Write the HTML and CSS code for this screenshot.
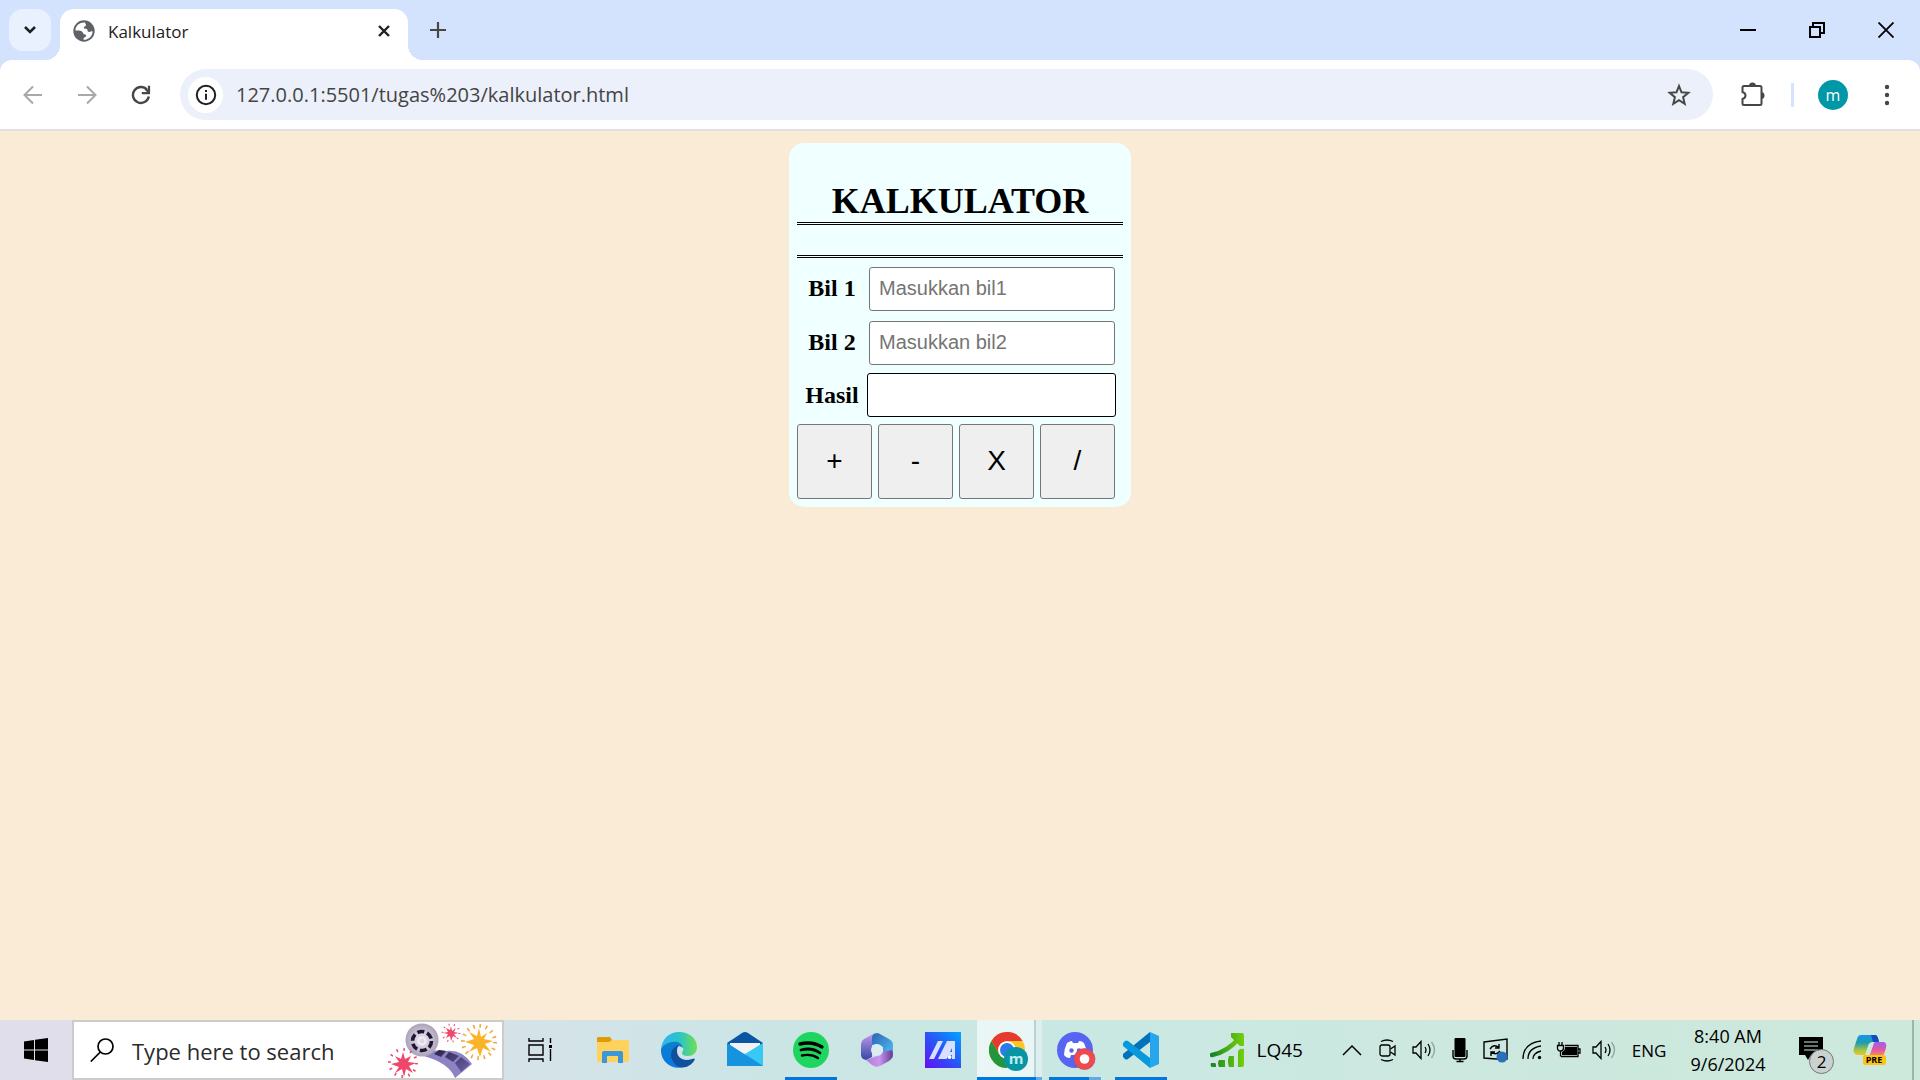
FILE: index.html
```
<!DOCTYPE html>
<html lang="id">
<head>
<meta charset="utf-8">
<title>Kalkulator</title>
<link rel="stylesheet" href="styles.css">
</head>
<body>
<div class="screen">
  <header class="tabstrip">
    <button class="tab-search" aria-label="Search tabs"><svg width="14" height="10" viewBox="0 0 14 10"><path d="M2 2l5 5 5-5" fill="none" stroke="#1f2023" stroke-width="2.6"/></svg></button>
    <div class="tab">
      <svg class="favicon" width="22" height="22" viewBox="0 0 22 22"><circle cx="11" cy="11" r="10.7" fill="#5f6368"/><path d="M12 2.500C6 2 2.500 6 2.400 10.500c2.500-.3 6.100 0 7.100 1.500.8 1.200 1 2.500 2.500 2.500 1.300 0 1.500 1 .8 2-.7.900-2.300.8-2.300 2.300v1c5 .3 9-3.800 9.100-8.300-.8-.6-1.600-.3-2.600.2-1.500.8-2.500-.2-2.600-1.700-.1-1.200-1-1.200-2.200-1.300-1.600-.1-1.800-1.800-.5-2.300 1.500-.5 1.700-1.800.8-2.400z" fill="#fff"/><path d="M8 3.500c-2.500 1.200-4.700 3.500-5 6l6-.3c0-1.500 1.800-1.500 2-3 .1-1.500-1-2.700-3-2.700z" fill="#fff"/></svg>
      <span class="tab-title">Kalkulator</span>
      <button class="icon-button" aria-label="Close tab"><svg width="14" height="14" viewBox="0 0 14 14"><path d="M2 2l10 10M12 2L2 12" stroke="#1f2023" stroke-width="2.400"/></svg></button>
    </div>
    <button class="icon-button new-tab" aria-label="New tab"><svg width="16" height="16" viewBox="0 0 16 16"><path d="M8 0v16M0 8h16" stroke="#474747" stroke-width="2.200"/></svg></button>
    <div class="window-controls">
      <button aria-label="Minimize"><svg width="16" height="16" viewBox="0 0 16 16"><path d="M0 8h16" stroke="#000" stroke-width="2"/></svg></button>
      <button aria-label="Restore"><svg width="16" height="16" viewBox="0 0 16 16"><path d="M1 5h10v10H1zM4 5V1h11v10h-4" fill="none" stroke="#000" stroke-width="2"/></svg></button>
      <button aria-label="Close"><svg width="16" height="16" viewBox="0 0 16 16"><path d="M.5.5l15 15M15.500.5l-15 15" stroke="#000" stroke-width="1.800"/></svg></button>
    </div>
  </header>

  <nav class="toolbar">
    <button class="tool" aria-label="Back"><svg width="20" height="20" viewBox="0 0 20 20"><path d="M19 10H2M10 1.500L1.500 10l8.500 8.500" fill="none" stroke="#a8a8a8" stroke-width="2"/></svg></button>
    <button class="tool" aria-label="Forward"><svg width="20" height="20" viewBox="0 0 20 20"><path d="M1 10h17M10 1.500l8.500 8.500-8.500 8.500" fill="none" stroke="#a8a8a8" stroke-width="2"/></svg></button>
    <button class="tool" aria-label="Reload"><svg width="20" height="20" viewBox="0 0 20 20"><path d="M17.800 11.500A8 8 0 1 1 16 4.700" fill="none" stroke="#474747" stroke-width="2.400"/><path d="M18 .8v7.400h-7.200M17.500 7l-3-3" fill="none" stroke="#474747" stroke-width="2.200"/></svg></button>
    <div class="omnibox">
      <button class="site-info" aria-label="Site information"><svg width="22" height="22" viewBox="0 0 22 22"><circle cx="11" cy="11" r="9.200" fill="none" stroke="#1f2023" stroke-width="2"/><path d="M11 9.800v6M11 6v2" stroke="#1f2023" stroke-width="2"/></svg></button>
      <input class="url" aria-label="Address" value="127.0.0.1:5501/tugas%203/kalkulator.html">
      <button class="icon-button" aria-label="Bookmark"><svg width="24" height="24" viewBox="0 0 24 24"><path d="M12 3l2.500 6.300 6.800.5-5.200 4.400 1.600 6.600L12 17.200l-5.700 3.600 1.600-6.600-5.200-4.400 6.800-.5z" fill="none" stroke="#474747" stroke-width="2"/></svg></button>
    </div>
    <button class="tool extensions" aria-label="Extensions"><svg width="26" height="26" viewBox="0 0 26 26"><path d="M4 4h16q1.500 0 1.500 1.500v16q0 1.500-1.500 1.500H4q-1.500 0-1.500-1.500V17q3-1 3-3.500t-3-3.500V5.500Q2.500 4 4 4z" fill="none" stroke="#474747" stroke-width="2"/><path d="M9 4a3.500 3.500 0 0 1 7 0zM21 10a3.200 3.200 0 0 1 0 7z" fill="#474747"/></svg></button>
    <span class="divider"></span>
    <button class="avatar" aria-label="Profile">m</button>
    <button class="tool menu" aria-label="Menu"><svg width="6" height="22" viewBox="0 0 6 22"><g fill="#474747"><circle cx="3" cy="3" r="2.200"/><circle cx="3" cy="11" r="2.200"/><circle cx="3" cy="19" r="2.200"/></g></svg></button>
  </nav>

  <main class="page">
    <form class="calculator">
      <h1>KALKULATOR</h1>
      <hr>
      <div class="field"><label for="bil1">Bil 1</label><input id="bil1" placeholder="Masukkan bil1"></div>
      <div class="field"><label for="bil2">Bil 2</label><input id="bil2" placeholder="Masukkan bil2"></div>
      <div class="field result"><label for="hasil">Hasil</label><input id="hasil" readonly></div>
      <div class="keys">
        <button type="button">+</button><button type="button">-</button><button type="button">X</button><button type="button">/</button>
      </div>
    </form>
  </main>

  <footer class="taskbar">
    <button class="start" aria-label="Start"><svg width="24" height="24" viewBox="0 0 24 24"><path d="M0 3.500L10 2v9.500H0zM11 1.800L24 0v11.500H11zM0 12.500h10V22L0 20.500zM11 12.500h13V24l-13-1.800z"/></svg></button>
    <label class="search">
      <svg width="24" height="24" viewBox="0 0 24 24"><circle cx="15.500" cy="8.500" r="7.500" fill="none" stroke="#000" stroke-width="1.700"/><path d="M10.300 14L.8 23.500" stroke="#000" stroke-width="1.700"/></svg>
      <input placeholder="Type here to search" aria-label="Type here to search">
      <svg width="112" height="56" viewBox="386 1022 112 56">
        <defs><linearGradient id="film" x2="1" y2="1"><stop stop-color="#2b2045"/><stop offset="1" stop-color="#6c64ac"/></linearGradient><radialGradient id="reel"><stop offset=".3" stop-color="#ddd6e4"/><stop offset="1" stop-color="#aaa3b8"/></radialGradient></defs>
        <path d="M424 1056q10-8 22-5 16-2 26 13l-17 14q-6-15-31-22z" fill="#8c83c4"/>
        <path d="M434 1054l5-4 7 1-5 6zM445 1057l4-5 10 4-6 6zM455 1063l6-6 9 7-9 8z" fill="url(#film)"/>
        <circle cx="422" cy="1040" r="16.500" fill="url(#reel)"/><circle cx="422" cy="1041" r="9.500" fill="none" stroke="#211735" stroke-width="3.600" stroke-dasharray="7 2.950"/><circle cx="422" cy="1041" r="3.500" fill="none" stroke="#f1edf4" stroke-width="2"/>
        <path d="M403 1052l2 7 6-3-3 6 8 1-7 3 4 7-7-4-2 8-2-8-7 4 4-6-8-3 8-2-4-6 6 3z" fill="#ee476a"/><circle cx="403" cy="1063" r="13.500" fill="none" stroke="#ee476a" stroke-width="3" stroke-dasharray="1.500 5.570"/>
        <path d="M451 1026l1 5 4-3-2 4 5 1-5 1 3 4-4-2-2 5-1-5-4 2 2-4-5-1 5-1-2-4 4 2z" fill="#ee476a"/><circle cx="451" cy="1033" r="8.500" fill="none" stroke="#ee476a" stroke-width="2" stroke-dasharray="1 4.340"/>
        <path d="M479 1028l2 9 6-4-3 6 9 2-8 3 6 8-8-4-3 9-3-9-8 4 5-7-9-3 9-3-5-7 8 4z" fill="#fbb32c"/><circle cx="479" cy="1042" r="16" fill="none" stroke="#f5a33b" stroke-width="4" stroke-dasharray="1.500 4.783"/>
      </svg>
    </label>
    <div class="apps">
      <button class="taskview" aria-label="Task view"><svg width="26" height="26" viewBox="0 0 26 26"><path d="M2 1v3h14V1M2 8h14v10H2zM2 25v-3h14v3M23.500 1v5M23.500 12v12" fill="none" stroke="#000" stroke-width="1.400"/><path d="M22 8h3v3h-3z"/></svg></button>
      <button class="app" aria-label="File Explorer"><svg width="36" height="36" viewBox="0 0 36 36"><path d="M2 6q0-1 1-1h12l2 3v4H2z" fill="#e09b05"/><path d="M2 10h12l3-2h15q2 0 2 2v18q0 2-2 2H4q-2 0-2-2z" fill="#ffd25c"/><path d="M7 31V21q0-2 2-2h17q2 0 2 2v10h-5v-7H12v7z" fill="#3a96dd"/></svg></button>
      <button class="app" aria-label="Edge"><svg width="36" height="36" viewBox="0 0 36 36"><defs><linearGradient id="eg"><stop stop-color="#2fb5ef"/><stop offset=".5" stop-color="#2ac3cc"/><stop offset="1" stop-color="#6fe04f"/></linearGradient><linearGradient id="eb" x2="0" y2="1"><stop stop-color="#0d7fcb"/><stop offset="1" stop-color="#0878e0"/></linearGradient></defs><path d="M0 17C1 7 8 0 18 0c11 0 18 7 18 15 0 6-4 9-9 9-4 0-6-1-6-3 0-1 2-2 1-5C20 10 7 9 0 17z" fill="url(#eg)"/><path d="M0 17c4-8 20-11 22-1-5-4-9 0-9 5 0 7 6 12 14 12-14 8-28-3-27-16z" fill="url(#eb)"/><path d="M18 13c-7 2-11 10-5 18 6 8 16 4 20-2 2-3 0-3-2-2-8 3-15-1-15-8 0-3 1-5 2-6z" fill="#10509f"/></svg></button>
      <button class="app" aria-label="Mail"><svg width="36" height="36" viewBox="0 0 36 36"><path d="M0 11L15 1q3-2 6 0l15 10v8H0z" fill="#0b55a5"/><path d="M3 11h30v10H3z" fill="#f3f3f6"/><path d="M0 11l18 12 18-12v23H0z" fill="#2cb5ef"/><path d="M36 11L18 22l18 12z" fill="#37c8f3"/><path d="M0 11l36 23H0z" fill="#1693df"/></svg></button>
      <button class="app open" aria-label="Spotify"><svg width="36" height="36" viewBox="0 0 36 36"><circle cx="18" cy="18" r="18" fill="#1ed65f"/><g fill="none" stroke="#000" stroke-linecap="round"><path d="M7 12q12-3 22 3" stroke-width="3.400"/><path d="M8 18q11-3 19 3" stroke-width="2.800"/><path d="M9 23.500q9-2 16 2.500" stroke-width="2.400"/></g></svg></button>
      <button class="app" aria-label="Microsoft 365"><svg width="36" height="36" viewBox="0 0 36 36"><defs><linearGradient id="m1" x2="0" y2="1"><stop stop-color="#c39cf3"/><stop offset="1" stop-color="#3447a3"/></linearGradient><linearGradient id="m2" x2="1" y2="1"><stop stop-color="#2b62b4"/><stop offset="1" stop-color="#53c6f6"/></linearGradient><linearGradient id="m3"><stop stop-color="#b777d9"/><stop offset=".5" stop-color="#c895ee"/><stop offset="1" stop-color="#653a8f"/></linearGradient></defs><path d="M16 1L5 7q-3 2-3 5v11q0 4 5 5l6-3V13q0-5 3-12z" fill="url(#m1)"/><path d="M13 13V5q1-4 6-4l11 6q4 2 4 6v13l-10-3v-8l-6-3z" fill="url(#m2)"/><path d="M7 28l11-4 6-4 9-2q3 7-3 11l-9 5q-4 2-8-1z" fill="url(#m3)"/><circle cx="18" cy="18" r="6" fill="#d9edf2"/></svg></button>
      <button class="app" aria-label="MyASUS"><svg width="36" height="36" viewBox="0 0 36 36"><defs><linearGradient id="ma" x1="1" x2="0" y2="1"><stop stop-color="#00a5ff"/><stop offset=".5" stop-color="#2856f8"/><stop offset="1" stop-color="#650df3"/></linearGradient></defs><path d="M0 0h36v36H0z" fill="url(#ma)"/><path d="M13 9h5L9 27H4zM22 9h5l-9 18h-5zM27 9h3v18h-3V16l-5.500 11H18zM22 20h5v3h-7z" fill="#d7e1ff"/><circle cx="24.500" cy="25" r="2" fill="#fff"/></svg></button>
      <button class="app open active" aria-label="Chrome"><svg width="40" height="40" viewBox="0 0 40 40"><circle cx="18" cy="18" r="18" fill="#fcc629"/><path d="M2.400 9A18 18 0 0 1 33.600 9H18a9 9 0 0 0-8 13z" fill="#e53a2f"/><path d="M2.400 9A18 18 0 0 0 18 36l7-13q-9 6-15-1z" fill="#23963d"/><circle cx="18" cy="18" r="8.800" fill="#fff"/><circle cx="18" cy="18" r="7" fill="#2d7bea"/><circle cx="27" cy="27" r="12" fill="#0795a5"/><text x="27" y="32" class="badge-letter">m</text></svg></button>
      <button class="app open grouped" aria-label="Discord"><svg width="40" height="40" viewBox="0 0 40 40"><circle cx="18" cy="18" r="18" fill="#5865f2"/><path d="M10 11q3-2 5-2l1 2h5l1-2q3 0 5 2 3 6 3 12-3 3-6 3l-1-3h-9l-1 3q-4 0-6-3 0-6 3-12z" fill="#fff"/><circle cx="14.500" cy="18.500" r="2.200" fill="#5865f2"/><circle cx="22" cy="18.500" r="2.200" fill="#5865f2"/><circle cx="27.500" cy="27" r="10.500" fill="#ee4b51" stroke="#c04b55" stroke-width=".7"/><circle cx="27.500" cy="27" r="4.800" fill="#fff"/></svg></button>
      <button class="app open" aria-label="Visual Studio Code"><svg width="36" height="36" viewBox="0 0 36 36"><path d="M27 0v10L5 27q-2 1-3 0l-2-2q-1-2 0-3z" fill="#0072bb"/><path d="M27 36V26L5 9Q3 8 2 9l-2 2q-1 2 0 3z" fill="#0799dc"/><path d="M27 0l9 4v28l-9 4z" fill="#27a6ee"/></svg></button>
    </div>
    <a class="news" href="#">
      <svg width="34" height="34" viewBox="0 0 34 34"><defs><linearGradient id="gr" x1="0" x2="1"><stop stop-color="#198327"/><stop offset="1" stop-color="#73cf0a"/></linearGradient></defs><path d="M2 22Q18 19 30 4" fill="none" stroke="url(#gr)" stroke-width="4.500" stroke-linecap="round"/><path d="M21 0h11q2 0 2 2v11h-4L21 4zM1 30h4q1 0 1 2v2H2q-2-1-1-4zM9 27h6v7H9q-2-4 0-7zM19 23h5v11h-5q-2-6 0-11zM28 18q2-3 6-2v16q0 2-2 2h-4z" fill="url(#gr)"/></svg>
      <span>LQ45</span>
    </a>
    <div class="tray">
      <button aria-label="Show hidden icons"><svg width="20" height="12" viewBox="0 0 20 12"><path d="M1 11l9-9 9 9" fill="none" stroke="#000" stroke-width="1.500"/></svg></button>
      <button aria-label="Meet now"><svg width="20" height="24" viewBox="0 0 20 24"><rect x="2" y="7" width="10" height="11" rx="2" fill="none" stroke="#000" stroke-width="1.300"/><path d="M12.500 11L17 8v9l-4.500-3M3 3.500q6-3 12 0M3 21.500q6 3 12 0" fill="none" stroke="#000" stroke-width="1.300"/></svg></button>
      <button aria-label="Volume"><svg width="24" height="20" viewBox="0 0 24 20"><path d="M1 7h3l5-5.500v17L4 13H1zM13 7q2 3 0 6M16 4q4 6 0 12" fill="none" stroke="#000" stroke-width="1.300"/><path d="M19.500 2q6 8 0 16" fill="none" stroke="#8fa59c" stroke-width="1.300"/></svg></button>
      <button aria-label="Microphone"><svg width="16" height="26" viewBox="0 0 16 26"><rect x="2.500" y="1" width="11" height="19" rx="1"/><path d="M1 13v6q0 3 3 3h8q3 0 3-3v-6M8 22v3M4.500 24.500h7" fill="none" stroke="#000" stroke-width="1.400"/></svg></button>
      <button aria-label="Updates"><svg width="26" height="26" viewBox="0 0 26 26"><path d="M1 5l23-3v20H13L1 21z" fill="none" stroke="#000" stroke-width="1.400"/><path d="M7 12q4-6 9-1M16 7v4h-4M17 14q-4 5-9 1M8 19v-4h4" fill="none" stroke="#000" stroke-width="1.400"/><circle cx="19" cy="20" r="5.500" fill="#2870b9"/></svg></button>
      <button aria-label="Network"><svg width="20" height="20" viewBox="0 0 20 20"><path d="M1 19Q1 3 19 1M6 19Q6 8 19 6M11 19q0-6 8-8" fill="none" stroke="#000" stroke-width="1.300"/><circle cx="17.500" cy="17.500" r="1.700"/></svg></button>
      <button aria-label="Battery"><svg width="25" height="18" viewBox="0 0 25 18"><path d="M5 15.500h17v-11H9M22 8h2v4h-2M3 1v3M6 1v3M1.500 4.500h6V7q0 3-3 3t-3-3zM4.500 10v5.500" fill="none" stroke="#000" stroke-width="1.300"/><path d="M9 6h12v8H6v-3q3-1 3-5z"/></svg></button>
      <button aria-label="Sound"><svg width="24" height="20" viewBox="0 0 24 20"><path d="M1 7h3l5-5.500v17L4 13H1zM13 7q2 3 0 6M16 4q4 6 0 12" fill="none" stroke="#000" stroke-width="1.300"/><path d="M19.500 2q6 8 0 16" fill="none" stroke="#8fa59c" stroke-width="1.300"/></svg></button>
      <button class="language">ENG</button>
      <button class="clock"><time>8:40 AM</time><time>9/6/2024</time></button>
      <button class="notifications" aria-label="2 notifications"><svg width="24" height="24" viewBox="0 0 24 24"><path d="M0 0h24v18H12l-3 5-3-5H0z"/><path d="M5 5h14M5 9h14M5 13h14" stroke="#cfe8dc" stroke-width="1.200"/></svg><span class="count">2</span></button>
      <button class="copilot" aria-label="Copilot"><svg width="34" height="32" viewBox="0 0 34 32"><defs><linearGradient id="c1" x2="0" y2="1"><stop stop-color="#1494ef"/><stop offset=".4" stop-color="#219dac"/><stop offset=".8" stop-color="#b4c938"/><stop offset="1" stop-color="#efc329"/></linearGradient><linearGradient id="c2" x2="0" y2="1"><stop stop-color="#a05fee"/><stop offset=".5" stop-color="#e255a8"/><stop offset="1" stop-color="#fb9b53"/></linearGradient></defs><path d="M8 1h14q3 1 4 7h-6q-4 0-5 4l-3 9H5q-6-1-4-7l3-9q1-4 4-4z" fill="url(#c1)"/><path d="M18 1h5q2 1 3 7h-6z" fill="#174bbd"/><path d="M22 8h9q3 1 2 6l-3 9H16l4-11q1-4 2-4z" fill="url(#c2)"/><rect x="10" y="21" width="23" height="10" rx="2" fill="#fdc413"/><text x="21" y="29" class="pre">PRE</text></svg></button>
      <button class="show-desktop" aria-label="Show desktop"></button>
    </div>
  </footer>
</div>
</body>
</html>
```
FILE: styles.css
```
* { box-sizing: border-box; }
body { margin: 0; font-family: "Open Sans", "Noto Sans", sans-serif; color: #000; }
button { padding: 0; border: 0; background: none; color: inherit; font: inherit; }
input { min-width: 0; padding: 0; font: inherit; }
svg { display: block; flex: none; }

.screen { display: flex; flex-direction: column; min-height: 100vh; background: #d3e3fd; }

/* Browser tabs */
.tabstrip { display: flex; align-items: flex-start; height: 60px; padding: 9px 0 0 9px; }
.tab-search { display: grid; place-items: center; width: 42px; height: 42px; margin-right: 9px; border-radius: 14px; background: #e9f1fe; }
.tab { position: relative; display: flex; align-items: center; width: 348px; height: 51px; padding: 0 14px 8px 13px; border-radius: 14px 14px 0 0; background: #fff; }
.tab::before, .tab::after { content: ""; position: absolute; bottom: 0; width: 15px; height: 15px; }
.tab::before { right: 100%; background: radial-gradient(circle at 0 0, transparent 15px, #fff 15px); }
.tab::after { left: 100%; background: radial-gradient(circle at 100% 0, transparent 15px, #fff 15px); }
.tab-title { flex: 1; margin-left: 13px; padding-top: 2px; font-size: 17px; line-height: 24px; color: #1f2023; }
.icon-button { display: grid; place-items: center; width: 20px; height: 42px; }
.new-tab { margin-left: 20px; }
.window-controls { display: flex; margin-left: auto; }
.window-controls button { display: grid; place-items: center; width: 69px; height: 42px; }

/* Address row */
.toolbar { display: flex; align-items: center; height: 71px; padding: 0 12px; border-bottom: 2px solid #dfe1e1; border-radius: 12px 12px 0 0; background: #fff; }
.tool { display: grid; place-items: center; width: 42px; height: 42px; margin-right: 12px; }
.omnibox { display: flex; flex: 1; align-items: center; height: 51px; margin-left: 6px; padding: 0 26px 0 8px; border-radius: 26px; background: #ecf0fa; }
.site-info { display: grid; place-items: center; width: 35px; height: 36px; border-radius: 50%; background: #fff; }
.url { flex: 1; margin-left: 13px; border: 0; background: none; font-size: 20px; color: #444; }
.extensions { margin: 0 17px 0 19px; }
.divider { width: 3px; height: 24px; border-radius: 1px; background: #d3e3fd; }
.avatar { width: 30px; height: 30px; margin-left: 24px; border-radius: 50%; background: #0097a7; font-size: 16px; line-height: 28px; color: #fff; }
.menu { margin: 0 0 0 18px; }

/* Calculator page */
.page { display: flex; flex: 1; justify-content: center; align-items: flex-start; padding: 12px 0; background: #faebd7; }
.calculator { width: 342px; padding: 8px; border-radius: 15px; background: #f0ffff; font-family: "Liberation Serif", serif; }
.calculator h1 { margin: 30px 0; border-bottom: 3px double #000; font-size: 36px; line-height: 41px; text-align: center; }
.calculator hr { height: 3px; margin: 0 0 9px; border: 0; border-top: 3px double #000; }
.field { display: flex; align-items: center; margin-bottom: 10px; padding-right: 8px; }
.field label { width: 72px; padding: 0 2px 2px 0; font-size: 24px; font-weight: bold; line-height: 28px; text-align: center; }
.field input { flex: 1; height: 44px; padding: 0 9px 2px; border: 1px solid #767676; border-radius: 3px; background: #fff; font-family: "Liberation Sans", sans-serif; font-size: 20px; }
.field input::placeholder { color: #757575; }
.result { margin: -2px 0 7px; padding-right: 7px; }
.result label { width: 70px; padding: 0; }
.result input { border-color: #000; }
.keys { display: flex; gap: 6px; }
.keys button { width: 75px; height: 75px; padding-bottom: 2px; border: 1px solid #767676; border-radius: 3px; background: #efefef; font-family: "Liberation Sans", sans-serif; font-size: 28px; }

/* Desktop taskbar */
.taskbar { display: flex; height: 60px; background: linear-gradient(90deg, #e1deeb 0, #dcdfeb 12%, #d5e3e9 27%, #cbe5e5 40%, #cae8e3 55%, #cce8df 75%, #cde9dc 100%); }
.taskbar button { display: grid; place-items: center; flex: none; }
.start { width: 72px; }
.search { display: flex; flex: none; align-items: center; width: 432px; padding: 0 4px 0 16px; border: 2px solid #ccc; background: #fff; }
.search input { flex: 1; margin-left: 18px; padding-top: 2px; border: 0; background: none; font-size: 22px; }
.search input::placeholder { color: #2b2b2b; }
.apps { display: flex; flex: none; }
.taskview { width: 72px; margin-right: 4px; }
.taskbar .app { width: 66px; }
.open { background: linear-gradient(#0078d7, #0078d7) center bottom / 52px 3px no-repeat; }
.taskbar .active { padding: 4px 0 0; background: linear-gradient(90deg, transparent 1px, #0078d7 1px 60px, #60aae6 60px) 0 100% / 100% 3px no-repeat, linear-gradient(90deg, transparent 1px, #eaf5f5 1px 58px, #b8d3d2 58px 60px, #dceeee 60px); }
.taskbar .grouped { padding: 4px 0 0 4px; background: linear-gradient(90deg, #0078d7 40px, #60aae6 40px) center bottom / 52px 3px no-repeat; }
.badge-letter { font: 700 15px "Open Sans", sans-serif; fill: #c0eef0; text-anchor: middle; }
.news { display: flex; align-items: center; gap: 13px; margin-left: auto; padding-right: 31px; font-size: 19px; color: #000; text-decoration: none; }
.tray { display: flex; flex: none; }
.tray button { width: 36px; }
.tray .language { width: 54px; font-size: 17px; }
.tray .clock { width: 104px; align-content: center; font-size: 18px; line-height: 28px; white-space: nowrap; }
.tray .notifications { position: relative; width: 62px; padding-bottom: 2px; }
.count { position: absolute; left: 29px; top: 29px; width: 25px; height: 25px; border: 1px solid #777; border-radius: 50%; background: #c9d2cf; font-size: 17px; line-height: 23px; }
.tray .copilot { width: 56px; margin-right: 14px; }
.pre { font: 700 9px "Open Sans", sans-serif; text-anchor: middle; }
.tray .show-desktop { width: 8px; border-left: 2px solid #9fb5ac; }
```
